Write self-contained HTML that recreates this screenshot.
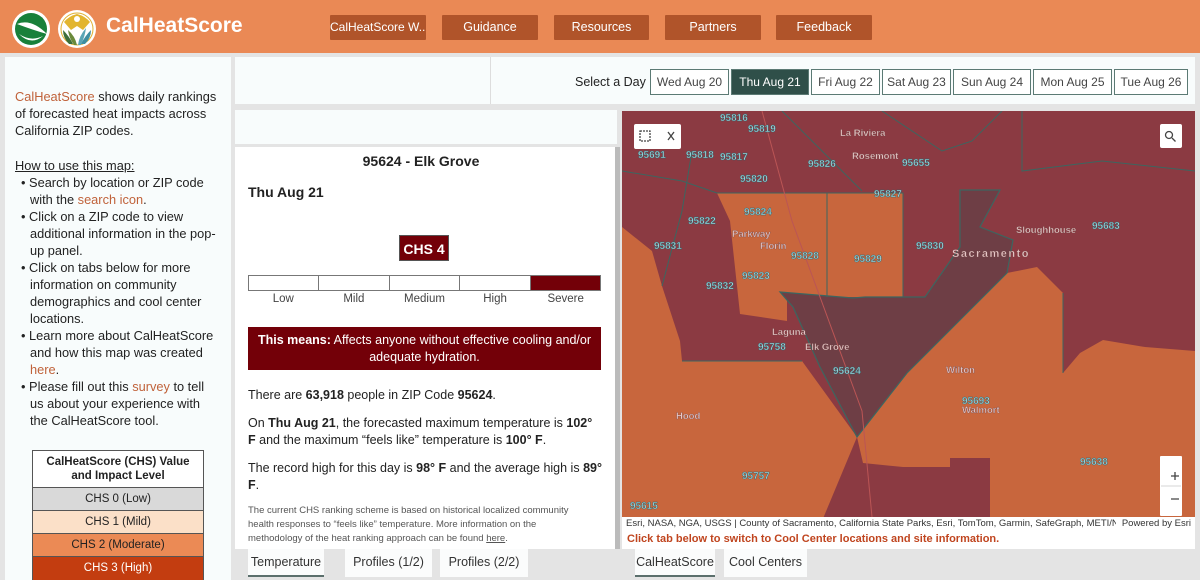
<!DOCTYPE html>
<html><head><meta charset="utf-8"><style>
*{box-sizing:border-box;margin:0;padding:0}
html,body{width:1200px;height:580px;overflow:hidden}
body{background:#e4e4e4;font-family:"Liberation Sans",sans-serif;color:#222;position:relative}
.hdr{position:absolute;left:0;top:0;width:1200px;height:53px;background:#ea8955}
.btn{position:absolute;top:15px;height:25px;background:#b0542a;color:#fff;font-size:12.5px;text-align:center;line-height:25px;border-radius:1px;white-space:nowrap;overflow:hidden}
.title{position:absolute;left:106px;top:14px;color:#fff;font-size:21px;font-weight:bold}
.left{position:absolute;left:5px;top:57px;width:226px;height:523px;background:#f8fcfc;font-size:12.8px;line-height:17px;overflow:hidden}
.o{color:#c0623a}
.top{position:absolute;left:235px;top:57px;width:960px;height:47px;background:#f8fcfc}
.day{position:absolute;top:69px;height:26px;border:1px solid #5b7a74;background:#fff;font-size:12px;line-height:24px;text-align:center;color:#444;white-space:nowrap}
.strip{position:absolute;left:235px;top:110px;width:382px;height:34px;background:#f8fcfc}
.pop{position:absolute;left:235px;top:147px;width:380px;height:402px;background:#fff;font-size:12.5px;line-height:17px}
.tab{position:absolute;top:549px;height:28px;background:#fbfcfc;font-size:12.5px;line-height:26px;text-align:center;color:#333}
.sel{border-bottom:2px solid #5b6f6c}
.mapw{position:absolute;left:622px;top:111px;width:573px;height:438px;background:#fff}
</style></head><body>
<div class="hdr">
<svg style="position:absolute;left:11px;top:8px" width="88" height="42" viewBox="0 0 88 42">
<circle cx="20" cy="21" r="19" fill="#fff"/><circle cx="20" cy="21" r="16" fill="#19803a"/>
<path d="M6 16 Q20 10 36 26 Q22 22 6 16Z" fill="#fff"/><path d="M8 26 Q20 34 32 28 Q20 38 8 26Z" fill="#fff"/>
<circle cx="66" cy="21" r="19" fill="#fff"/><circle cx="66" cy="21" r="16" fill="#fff" stroke="#e0b030" stroke-width="1"/>
<path d="M53 14 Q58 8 66 6 Q74 8 79 14 L72 22 L66 18 L60 22Z" fill="#e2b52f"/>
<circle cx="66" cy="11" r="3" fill="#fff"/>
<path d="M52 22 Q58 28 62 36 L58 36 Q52 30 52 22Z" fill="#3d6e3a"/>
<path d="M57 22 Q64 28 66 37 L63 37 Q58 30 57 22Z" fill="#6a8a3b"/>
<path d="M80 22 Q74 28 70 36 L74 36 Q80 30 80 22Z" fill="#3f8ea0"/>
<path d="M75 20 Q68 28 67 37 L70 37 Q74 28 75 20Z" fill="#5aa5b5"/>
</svg>
<div class="title">CalHeatScore</div>
<div class="btn" style="left:330px;width:96px;font-size:12px">CalHeatScore W...</div>
<div class="btn" style="left:442px;width:96px">Guidance</div>
<div class="btn" style="left:554px;width:95px">Resources</div>
<div class="btn" style="left:665px;width:96px">Partners</div>
<div class="btn" style="left:776px;width:96px">Feedback</div>
</div>

<div class="left">
<div style="position:absolute;left:10px;top:31px;width:205px"><span class="o">CalHeatScore</span> shows daily rankings of forecasted heat impacts across California ZIP codes.</div>
<div style="position:absolute;left:10px;top:100px;width:203px"><u>How to use this map:</u>
<div style="padding-left:15px;text-indent:-9px">• Search by location or ZIP code with the <span class="o">search icon</span>.</div>
<div style="padding-left:15px;text-indent:-9px">• Click on a ZIP code to view additional information in the pop-up panel.</div>
<div style="padding-left:15px;text-indent:-9px">• Click on tabs below for more information on community demographics and cool center locations.</div>
<div style="padding-left:15px;text-indent:-9px">• Learn more about CalHeatScore and how this map was created <span class="o">here</span>.</div>
<div style="padding-left:15px;text-indent:-9px">• Please fill out this <span class="o">survey</span> to tell us about your experience with the CalHeatScore tool.</div>
</div>
<div style="position:absolute;left:27px;top:393px;width:172px;border:1px solid #555;font-size:11.5px;text-align:center;line-height:14px">
<div style="background:#fff;font-weight:bold;padding:4px 0;height:36px">CalHeatScore (CHS) Value<br>and Impact Level</div>
<div style="background:#d9d9d9;border-top:1px solid #555;height:23px;line-height:22px">CHS 0 (Low)</div>
<div style="background:#fbe0c8;border-top:1px solid #555;height:23px;line-height:22px">CHS 1 (Mild)</div>
<div style="background:#eb8a55;border-top:1px solid #555;height:23px;line-height:22px">CHS 2 (Moderate)</div>
<div style="background:#c33d10;color:#fff;border-top:1px solid #555;height:30px;line-height:22px">CHS 3 (High)</div>
</div>
</div>

<div class="top">
<div style="position:absolute;left:255px;top:0;width:1px;height:47px;background:#ddd"></div>
<div style="position:absolute;left:340px;top:18px;font-size:12.5px">Select a Day</div>
</div>
<div class="day" style="left:650px;width:79px">Wed Aug 20</div>
<div class="day" style="left:731px;width:78px;background:#2f4f49;color:#fff">Thu Aug 21</div>
<div class="day" style="left:811px;width:69px">Fri Aug 22</div>
<div class="day" style="left:882px;width:69px">Sat Aug 23</div>
<div class="day" style="left:953px;width:78px">Sun Aug 24</div>
<div class="day" style="left:1033px;width:79px">Mon Aug 25</div>
<div class="day" style="left:1114px;width:74px">Tue Aug 26</div>
<div class="strip"></div>

<div class="pop">
<div style="position:absolute;left:0;width:372px;top:6px;text-align:center;font-weight:bold;font-size:14px">95624 - Elk Grove</div>
<div style="position:absolute;left:13px;top:37px;font-weight:bold;font-size:14px">Thu Aug 21</div>
<div style="position:absolute;left:164px;top:88px;width:50px;height:26px;background:#730008;color:#fff;font-weight:bold;font-size:14px;line-height:26px;text-align:center;border:1px solid #555">CHS 4</div>
<div style="position:absolute;left:13px;top:128px;width:353px;height:16px;border:1px solid #777;display:flex">
<div style="flex:1;border-right:1px solid #777"></div><div style="flex:1;border-right:1px solid #777"></div><div style="flex:1;border-right:1px solid #777"></div><div style="flex:1;border-right:1px solid #777"></div><div style="flex:1;background:#730008"></div></div>
<div style="position:absolute;left:13px;top:144px;width:353px;display:flex;font-size:11.5px;text-align:center;color:#444"><div style="flex:1">Low</div><div style="flex:1">Mild</div><div style="flex:1">Medium</div><div style="flex:1">High</div><div style="flex:1">Severe</div></div>
<div style="position:absolute;left:13px;top:180px;width:353px;height:43px;background:#730008;color:#fff;text-align:center;padding-top:5px;font-size:12.5px"><b>This means:</b> Affects anyone without effective cooling and/or adequate hydration.</div>
<div style="position:absolute;left:13px;top:240px;width:355px">There are <b>63,918</b> people in ZIP Code <b>95624</b>.</div>
<div style="position:absolute;left:13px;top:268px;width:355px">On <b>Thu Aug 21</b>, the forecasted maximum temperature is <b>102° F</b> and the maximum “feels like” temperature is <b>100° F</b>.</div>
<div style="position:absolute;left:13px;top:313px;width:355px">The record high for this day is <b>98° F</b> and the average high is <b>89° F</b>.</div>
<div style="position:absolute;left:13px;top:357px;width:345px;font-size:9.5px;line-height:14px;color:#555">The current CHS ranking scheme is based on historical localized community health responses to “feels like” temperature. More information on the methodology of the heat ranking approach can be found <u>here</u>.</div>
</div>
<div style="position:absolute;left:615px;top:147px;width:5px;height:402px;background:#bbb"></div>
<div class="tab sel" style="left:248px;width:76px">Temperature</div>
<div class="tab" style="left:345px;width:87px">Profiles (1/2)</div>
<div class="tab" style="left:440px;width:88px">Profiles (2/2)</div>

<div class="mapw">
<svg width="573" height="406" viewBox="0 0 573 406" style="position:absolute;left:0;top:0">
<rect width="573" height="406" fill="#8b3a42"/>
<polygon points="95,82 281,82 281,186 165,186 165,210 118,203 108,110" fill="#c8663d"/>
<polygon points="0,116 30,140 40,175 58,230 60,250 180,250 235,326 200,410 0,410" fill="#c8663d"/>
<polygon points="235,326 285,262 331,216 385,162 415,156 441,182 441,262 458,242 481,229 523,236 573,240 573,406 368,406 368,347 328,347 328,356 281,356 241,352" fill="#c8663d"/>
<polygon points="158,181 231,187 243,186 303,186 338,136 338,79 378,79 358,116 391,129 385,162 331,216 285,262 235,326 198,256 171,196" fill="#6e3e45" stroke="#3c6660" stroke-width="1.2"/>
<g fill="none" stroke="#3c6660" stroke-width="1">
<polyline points="95,82 281,82 281,186"/><polyline points="205,82 205,186"/><polyline points="60,250 180,250"/>
<polyline points="0,60 60,70 95,82"/><polyline points="70,40 60,100 40,175"/><polyline points="160,0 200,40 240,80"/>
<polyline points="260,0 320,40 350,30 380,0"/><polyline points="400,0 400,60 480,50 573,60"/>
<polyline points="441,182 441,262"/><polyline points="140,0 170,110 240,300 250,406" stroke="#b55" /></g>
<g font-family="Liberation Sans,sans-serif" font-size="10" font-weight="bold" fill="#9fd6dc" stroke="#2e5e66" stroke-width="0.4">
<text x="98" y="10">95816</text><text x="126" y="21">95819</text><text x="64" y="47">95818</text><text x="16" y="47">95691</text><text x="98" y="49">95817</text>
<text x="186" y="56">95826</text><text x="118" y="71">95820</text><text x="252" y="86">95827</text><text x="280" y="55">95655</text>
<text x="122" y="104">95824</text><text x="66" y="113">95822</text><text x="32" y="138">95831</text><text x="169" y="148">95828</text>
<text x="232" y="151">95829</text><text x="294" y="138">95830</text><text x="120" y="168">95823</text><text x="84" y="178">95832</text>
<text x="136" y="239">95758</text><text x="211" y="263">95624</text><text x="340" y="293">95693</text><text x="120" y="368">95757</text>
<text x="470" y="118">95683</text><text x="458" y="354">95638</text><text x="8" y="398">95615</text>
</g>
<g font-family="Liberation Sans,sans-serif" font-size="9.5" font-weight="bold" fill="#e8c8c8" stroke="#6b4040" stroke-width="0.3">
<text x="218" y="25">La Riviera</text><text x="230" y="48">Rosemont</text><text x="110" y="126">Parkway</text><text x="138" y="138">Florin</text>
<text x="330" y="146" font-size="11" letter-spacing="1.5">Sacramento</text><text x="394" y="122">Sloughhouse</text><text x="150" y="224">Laguna</text>
<text x="183" y="239">Elk Grove</text><text x="324" y="262">Wilton</text><text x="340" y="302">Walmort</text><text x="54" y="308">Hood</text></g>
<g fill="#fff"><rect x="12" y="13" width="47" height="25" rx="2"/><rect x="538" y="13" width="22" height="24" rx="2"/><rect x="538" y="345" width="22" height="60" rx="1"/></g>
<g stroke="#444" stroke-width="1.3" fill="none"><path d="M46 21l6 8M52 21l-6 8"/><rect x="18" y="20" width="10" height="10" stroke-dasharray="2 1"/>
<circle cx="547" cy="24" r="3.5"/><path d="M550 27l3.5 3.5"/><path d="M549 365h8M553 361v8M549 388h8"/><path d="M539 375h20" stroke="#ddd"/></g>
</svg>
<div style="position:absolute;left:0;top:406px;width:573px;height:14px;font-size:9.5px;color:#333;padding-left:4px;line-height:14px;white-space:nowrap;overflow:hidden">Esri, NASA, NGA, USGS | County of Sacramento, California State Parks, Esri, TomTom, Garmin, SafeGraph, METI/N...</div>
<div style="position:absolute;right:4px;top:406px;font-size:9.5px;line-height:14px;background:#fff;padding-left:6px;color:#333">Powered by Esri</div>
<div style="position:absolute;left:5px;top:422px;font-size:11px;font-weight:bold;color:#c0451f">Click tab below to switch to Cool Center locations and site information.</div>
</div>
<div class="tab sel" style="left:635px;width:80px">CalHeatScore</div>
<div class="tab" style="left:724px;width:83px">Cool Centers</div>
</body></html>
